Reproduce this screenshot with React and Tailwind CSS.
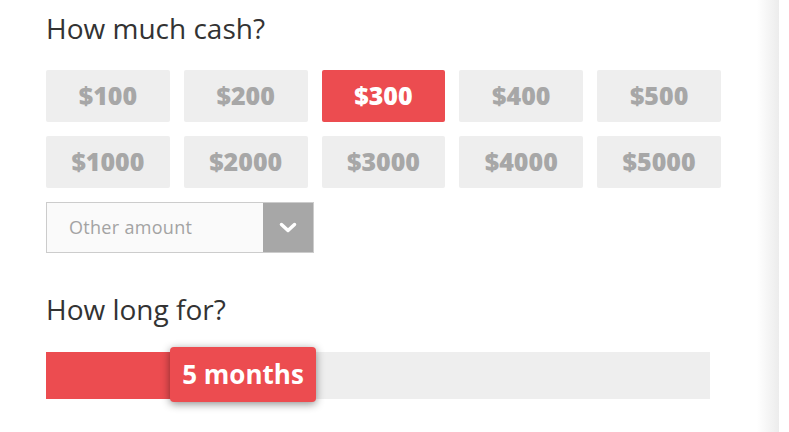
import React from "react";

const amounts = ["$100", "$200", "$300", "$400", "$500", "$1000", "$2000", "$3000", "$4000", "$5000"];

export default function App() {
  return (
    <div className="flex h-[432px] w-[789px] bg-white" style={{ fontFamily: "'Open Sans', Lato, sans-serif" }}>
      <div className="relative h-full w-[779px] bg-white pl-[46px] pt-[10px]">
        <div className="pointer-events-none absolute right-0 top-0 h-full w-[22px] bg-gradient-to-r from-white to-[#ececec]" />
        <h2 className="text-[28px] leading-[36px] font-normal text-[#333]">How much cash?</h2>
        <div className="mt-[24px] grid w-[675px] grid-cols-5 gap-[14px]">
          {amounts.map((a) => (
            <button
              key={a}
              className={
                a === "$300"
                  ? "flex h-[52px] items-center justify-center rounded-[2px] bg-[#ec4c50] text-[25px] font-extrabold text-white"
                  : "flex h-[52px] items-center justify-center rounded-[2px] bg-[#eeeeee] text-[25px] font-extrabold text-[#a7a7a7]"
              }
            >
              {a}
            </button>
          ))}
        </div>
        <div className="mt-[14px] flex h-[51px] w-[268px] border border-[#cccccc] bg-[#fafafa]">
          <div className="flex flex-1 items-center pl-[22px] text-[18px] tracking-[0.3px] text-[#a3a3a3]">Other amount</div>
          <div className="flex w-[50px] items-center justify-center bg-[#a7a7a7]">
            <svg width="18" height="12" viewBox="0 0 18 12">
              <path d="M2.5 2.5 L9 8.5 L15.5 2.5" fill="none" stroke="white" strokeWidth="3.5" strokeLinecap="round" strokeLinejoin="round" />
            </svg>
          </div>
        </div>
        <h2 className="mt-[38px] text-[28px] leading-[36px] font-normal text-[#333]">How long for?</h2>
        <div className="relative mt-[25px] flex h-[47px] w-[664px] bg-[#eeeeee]">
          <div className="h-full w-[140px] bg-[#ec4c50]" />
          <div className="absolute left-[124px] top-[-5px] flex h-[55px] w-[146px] items-center justify-center rounded-[4px] bg-[#ec4c50] text-[26px] font-bold text-white shadow-[0_2px_8px_rgba(0,0,0,0.45)]">
            5 months
          </div>
        </div>
      </div>
      <div className="h-full flex-1 bg-white" />
    </div>
  );
}
